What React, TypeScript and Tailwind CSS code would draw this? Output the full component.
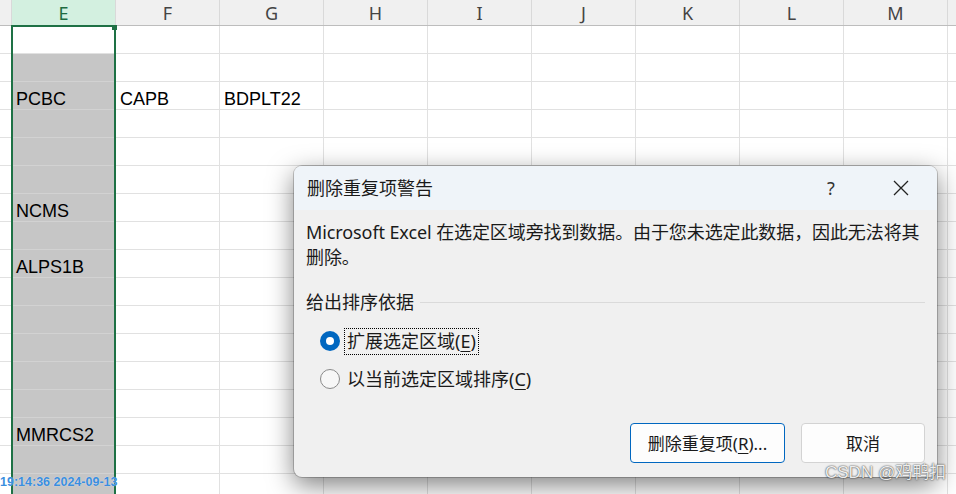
import React from "react";

const COLS = ["", "E", "F", "G", "H", "I", "J", "K", "L", "M", ""];
const ROWS = 17;
const data: Record<number, Record<number, string>> = {
  2: { 1: "PCBC", 2: "CAPB", 3: "BDPLT22" },
  6: { 1: "NCMS" },
  8: { 1: "ALPS1B" },
  14: { 1: "MMRCS2" },
};

const gridCols = "grid grid-cols-[12px_repeat(9,104px)_8px]";
const uiFont = { fontFamily: '"Noto Sans", "Noto Sans CJK SC", sans-serif' };
const sheetFont = { fontFamily: '"Liberation Sans", "Noto Sans CJK SC", sans-serif' };

function Sheet() {
  return (
    <div className="flex flex-col" style={sheetFont}>
      <div className={`${gridCols} h-[26px] bg-[#f0f0f0] border-b border-[#bdbdbd]`}>
        {COLS.map((c, i) => (
          <div
            key={i}
            className={`flex items-center justify-center text-[18px] leading-none ${
              i === 1 ? "bg-[#d3f0e0] text-[#1e6b41]" : "text-[#444444]"
            } ${i < COLS.length - 1 ? "border-r border-[#d9d9d9]" : ""}`}
            style={uiFont}
          >
            {c}
          </div>
        ))}
      </div>
      {Array.from({ length: ROWS }).map((_, r) => (
        <div key={r} className={`${gridCols} h-[28px]`}>
          {COLS.map((_, i) => {
            const gray = i === 1 && r > 0;
            const txt = data[r]?.[i];
            return (
              <div
                key={i}
                className={`flex items-end pl-[4px] text-[18px] leading-[20px] text-black whitespace-nowrap overflow-visible border-b ${
                  gray ? "bg-[#c6c6c6] border-[#d2d2d2]" : "bg-white border-[#e1e1e1]"
                } ${i < COLS.length - 1 ? "border-r border-r-[#e1e1e1]" : ""}`}
              >
                {txt}
              </div>
            );
          })}
        </div>
      ))}
    </div>
  );
}

function Dialog() {
  return (
    <div
      className="absolute left-[294px] top-[166px] w-[643px] h-[311px] rounded-[8px] bg-[#f0f0f0] overflow-hidden flex flex-col text-[#1a1a1a] shadow-[0_0_0_1px_rgba(0,0,0,0.2),0_8px_26px_rgba(0,0,0,0.5)]"
      style={uiFont}
    >
      <div className="h-[44px] bg-[#eff4f9] flex items-center pl-[13px] pr-[13px] shrink-0">
        <span className="text-[18px] leading-none">删除重复项警告</span>
        <div className="ml-auto w-[46px] flex justify-center text-[18px] leading-none text-[#333]">?</div>
        <div className="ml-[24px] w-[46px] flex justify-center">
          <svg width="16" height="16" viewBox="0 0 16 16" fill="none" stroke="#222" strokeWidth="1.3">
            <path d="M1 1 L15 15 M15 1 L1 15" />
          </svg>
        </div>
      </div>
      <div className="flex-1 flex flex-col px-[12px] pt-[10px] pb-[14px]">
        <div className="text-[18px] leading-[25px] whitespace-nowrap tracking-[-0.1px]">
          Microsoft Excel 在选定区域旁找到数据。由于您未选定此数据，因此无法将其
          <br />
          删除。
        </div>
        <div className="mt-[20px] flex items-center h-[25px]">
          <span className="text-[18px] leading-[25px]">给出排序依据</span>
          <div className="flex-1 h-px bg-[#dadada] ml-[6px]" />
        </div>
        <div className="mt-[7px] h-[38px] flex items-center pl-[14px]">
          <div className="w-[20px] h-[20px] rounded-full bg-[#0067c0] flex items-center justify-center">
            <div className="w-[8px] h-[8px] rounded-full bg-white" />
          </div>
          <span className="ml-[4px] h-[27px] px-[2px] flex items-center border border-dotted border-black text-[18px] leading-none">
            扩展选定区域(<span className="underline underline-offset-[3px]">E</span>)
          </span>
        </div>
        <div className="h-[38px] flex items-center pl-[14px]">
          <div className="w-[20px] h-[20px] rounded-full border border-[#8a8a8a] bg-[#f7f7f7]" />
          <span className="ml-[7px] text-[18px] leading-none">
            以当前选定区域排序(<span className="underline underline-offset-[3px]">C</span>)
          </span>
        </div>
        <div className="mt-auto flex justify-end gap-[16px]">
          <button className="w-[155px] h-[40px] rounded-[4px] border border-[#0067c0] bg-[#fdfdfd] text-[17px] leading-none text-[#1a1a1a]">
            删除重复项(<span className="underline underline-offset-[3px]">R</span>)...
          </button>
          <button className="w-[124px] h-[40px] rounded-[4px] border border-[#d3d3d3] bg-[#fdfdfd] text-[17px] leading-none text-[#1a1a1a]">
            取消
          </button>
        </div>
      </div>
    </div>
  );
}

export default function App() {
  return (
    <div className="relative w-[956px] h-[494px] overflow-hidden bg-white">
      <Sheet />
      {/* selection outline */}
      <div className="absolute left-[11px] top-[25px] w-[105px] h-[480px] border-2 border-[#1e7145]" />
      <div className="absolute left-[112px] top-[25px] w-[5px] h-[5px] bg-[#1e7145]" />
      <Dialog />
      <div
        className="absolute left-0 top-[476px] text-[12.5px] font-bold leading-none text-[#3a8ede] whitespace-nowrap [text-shadow:0_0_1px_rgba(255,255,255,0.8)]"
        style={{ fontFamily: '"Liberation Sans", sans-serif' }}
      >
        19:14:36 2024-09-13
      </div>
      <div
        className="absolute left-[825px] top-[464px] text-[17px] leading-none text-white/90 whitespace-nowrap [text-shadow:0_0_2px_rgba(0,0,0,0.7),0_0_1px_rgba(0,0,0,0.5)]"
        style={{ fontFamily: '"Liberation Sans", "Noto Sans CJK SC", sans-serif' }}
      >
        CSDN @鸡鸭扣
      </div>
    </div>
  );
}
